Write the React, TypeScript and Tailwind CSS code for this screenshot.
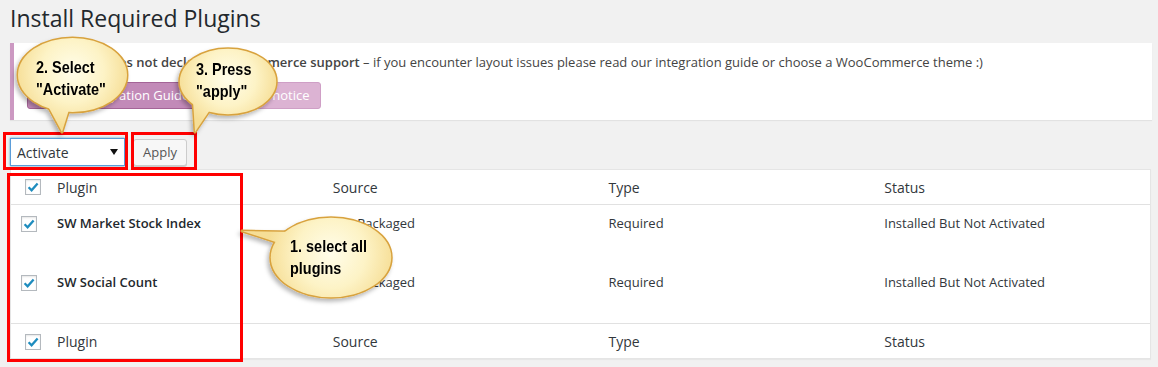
import React from "react";

const Check = () => (
  <span className="inline-flex w-[16px] h-[16px] border border-[#b4b9be] bg-white shadow-[inset_0_1px_2px_rgba(0,0,0,0.1)]">
    <svg width="14" height="14" viewBox="1 1 14 14">
      <path d="M3.6 8.2 L6.6 11.2 L12.6 4.4" fill="none" stroke="#1e8cbe" strokeWidth="2.3" />
    </svg>
  </span>
);

type CalloutDef = {
  id: string;
  cx: number;
  cy: number;
  rx: number;
  ry: number;
  tail: string;
};

const callouts: CalloutDef[] = [
  { id: "c2", cx: 72.5, cy: 75, rx: 54.5, ry: 37, tail: "62,132 42,95 72,100" },
  { id: "c3", cx: 228, cy: 81.5, rx: 48.25, ry: 32.75, tail: "195,132 193,100 214,104" },
  { id: "c1", cx: 331, cy: 257.5, rx: 60.25, ry: 39.75, tail: "242,231 295,232 285,245" },
];

const Callouts = () => (
  <svg className="absolute left-0 top-0 pointer-events-none" width="1158" height="367">
    <defs>
      {callouts.map((c) => (
        <radialGradient
          key={c.id}
          id={`g-${c.id}`}
          gradientUnits="userSpaceOnUse"
          cx={c.cx}
          cy={c.cy - c.ry * 0.1}
          r={Math.max(c.rx, c.ry) * 1.05}
        >
          <stop offset="0%" stopColor="#fffdea" />
          <stop offset="55%" stopColor="#fdf3c6" />
          <stop offset="100%" stopColor="#f6de96" />
        </radialGradient>
      ))}
      <filter id="sh" x="-30%" y="-30%" width="160%" height="160%">
        <feDropShadow dx="-2" dy="3" stdDeviation="2" floodColor="#000" floodOpacity="0.28" />
      </filter>
    </defs>
    {callouts.map((c) => (
      <g key={c.id} filter="url(#sh)">
        <polygon points={c.tail} fill="#d8a23e" stroke="#d8a23e" strokeWidth="3" strokeLinejoin="round" />
        <ellipse cx={c.cx} cy={c.cy} rx={c.rx} ry={c.ry} fill="#d8a23e" stroke="#d8a23e" strokeWidth="3" />
        <polygon points={c.tail} fill={`url(#g-${c.id})`} />
        <ellipse cx={c.cx} cy={c.cy} rx={c.rx} ry={c.ry} fill={`url(#g-${c.id})`} />
      </g>
    ))}
  </svg>
);

const CalloutText = ({ left, top, lines }: { left: number; top: number; lines: string[] }) => (
  <div
    className="absolute origin-left scale-x-[0.85] font-['Liberation_Sans',Arial,sans-serif] font-bold text-[17px] leading-[22px] text-black whitespace-nowrap"
    style={{ left, top }}
  >
    {lines.map((l) => (
      <div key={l}>{l}</div>
    ))}
  </div>
);

const cols = "grid grid-cols-[36px_1fr_1fr_1fr_1fr]";

export default function App() {
  return (
    <div className="relative w-[1158px] h-[367px] overflow-hidden bg-[#f1f1f1] font-['Open_Sans',sans-serif] text-[13px] text-[#32373c]">
      <div className="pl-[10px] pr-[7px]">
        <h1 className="pt-[4px] text-[23px] leading-[29px] font-normal text-[#23282d] mb-[10px]">
          Install Required Plugins
        </h1>

        <div className="mr-[-1px] bg-white border-l-4 border-[#cc99c2] shadow-[0_1px_1px_rgba(0,0,0,0.06)] pl-[12px] pt-[10px] pb-[11px] text-[#444]">
          <p className="leading-[19px]">
            <strong className="font-semibold">Your theme does not declare WooCommerce support</strong> – if you
            encounter layout issues please read our integration guide or choose a WooCommerce theme :)
          </p>
          <div className="mt-[10px] flex gap-[4px] pl-px">
            <span className="h-[27px] leading-[25px] px-[10px] rounded-[3px] border border-[#a46497] bg-[#c28ab8] text-white">
              Theme Integration Guide
            </span>
            <span className="h-[27px] leading-[25px] px-[10px] rounded-[3px] border border-[#cf9fc6] bg-[#dcb3d3] text-white">
              Hide this notice
            </span>
          </div>
        </div>

        <div className="mt-[18px] flex gap-[8px] items-start">
          <div className="w-[115px] h-[28px] border border-[#5b9dd9] shadow-[0_0_2px_rgba(30,140,190,0.8)] bg-white flex items-center justify-between pl-[6px] pr-[6px] text-[14px] text-[#32373c]">
            <span>Activate</span>
            <svg width="8" height="6" viewBox="0 0 8 6">
              <path d="M0 0 L8 0 L4 6 Z" fill="#111" />
            </svg>
          </div>
          <div className="mt-px h-[27px] leading-[25px] px-[9px] border border-[#cccccc] rounded-[3px] bg-[#f7f7f7] shadow-[0_1px_0_#cccccc] text-[#555]">
            Apply
          </div>
        </div>

        <div className="mt-[3px] w-[1141px] bg-white border border-[#e5e5e5] shadow-[0_1px_1px_rgba(0,0,0,0.04)]">
          <div className={`${cols} h-[35px] items-center border-b border-[#e1e1e1] text-[14px]`}>
            <div className="pl-[14px] flex">
              <Check />
            </div>
            <div className="pl-[10px]">Plugin</div>
            <div className="pl-[10px]">Source</div>
            <div className="pl-[10px]">Type</div>
            <div className="pl-[10px]">Status</div>
          </div>
          {["SW Market Stock Index", "SW Social Count"].map((name) => (
            <div key={name} className={`${cols} h-[59px] items-start`}>
              <div className="pl-[10px] pt-[11px] flex">
                <Check />
              </div>
              <div className="pl-[10px] pt-[9px] leading-[19px] font-semibold text-[#23282d]">{name}</div>
              <div className="pl-[10px] pt-[9px] leading-[19px]">Pre-Packaged</div>
              <div className="pl-[10px] pt-[9px] leading-[19px]">Required</div>
              <div className="pl-[10px] pt-[9px] leading-[19px]">Installed But Not Activated</div>
            </div>
          ))}
          <div className={`${cols} h-[35px] pt-px items-center border-t border-[#e1e1e1] text-[14px]`}>
            <div className="pl-[14px] flex">
              <Check />
            </div>
            <div className="pl-[10px]">Plugin</div>
            <div className="pl-[10px]">Source</div>
            <div className="pl-[10px]">Type</div>
            <div className="pl-[10px]">Status</div>
          </div>
        </div>
      </div>

      {/* red annotation boxes */}
      <div className="absolute left-[3px] top-[132px] w-[125px] h-[38px] border-[3px] border-[#ff0000]" />
      <div className="absolute left-[131px] top-[132px] w-[66px] h-[38px] border-[3px] border-[#ff0000]" />
      <div className="absolute left-[7px] top-[173px] w-[236px] h-[189px] border-[3px] border-[#ff0000]" />

      <Callouts />
      <CalloutText left={36} top={57} lines={["2. Select", "\"Activate\""]} />
      <CalloutText left={196} top={59} lines={["3. Press", "\"apply\""]} />
      <CalloutText left={290} top={236} lines={["1. select all", "plugins"]} />
    </div>
  );
}
